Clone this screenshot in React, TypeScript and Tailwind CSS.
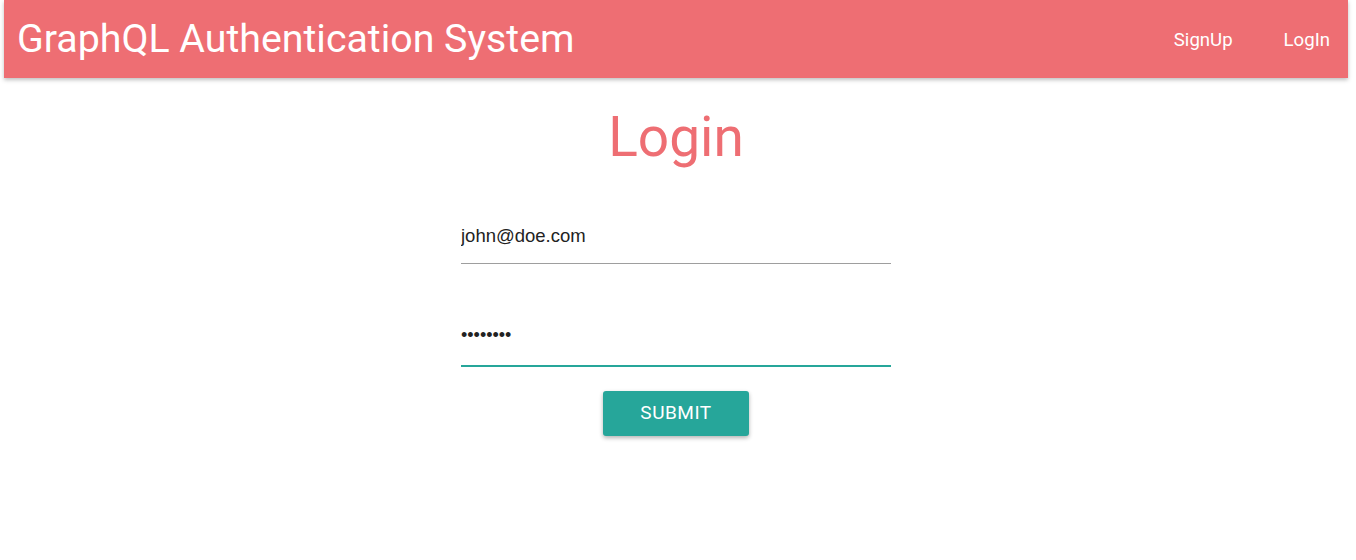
import React, { useState } from 'react';

const roboto = { fontFamily: 'Roboto, "Noto Sans", sans-serif' };
const arial = { fontFamily: '"Liberation Sans", Arial, sans-serif' };

export default function App() {
  const [email, setEmail] = useState('john@doe.com');
  const [password, setPassword] = useState('password');

  return (
    <div className="min-h-[560px] w-[1352px] bg-white" style={roboto}>
      {/* Navbar */}
      <nav className="mx-[4px] h-[78px] bg-[#ee6e73] text-white flex items-center justify-between shadow-[0_2px_4px_rgba(0,0,0,0.25)]">
        <a className="pl-[13px] pt-[1px] text-[39.3px] leading-none font-normal">GraphQL Authentication System</a>
        <ul className="flex items-center gap-[51px] pr-[18px] pt-[3px] text-[18.6px]">
          <li>SignUp</li>
          <li>LogIn</li>
        </ul>
      </nav>

      {/* Login form */}
      <div className="flex flex-col items-center">
        <h2 className="mt-[27px] text-[55px] leading-[64px] text-[#ee6e73] font-normal">Login</h2>

        <form
          className="w-[430px] mt-[49px] flex flex-col"
          onSubmit={e => e.preventDefault()}
        >
          <input
            type="email"
            value={email}
            onChange={e => setEmail(e.target.value)}
            className="h-[46px] pb-[10px] w-full border-b border-[#9e9e9e] text-[18.5px] text-[#222] outline-none bg-transparent"
            style={arial}
          />
          <input
            type="password"
            value={password}
            autoFocus
            onChange={e => setPassword(e.target.value)}
            className="mt-[55px] h-[48px] pb-[14px] w-full border-b-2 border-[#26a69a] text-[18px] text-[#222] outline-none bg-transparent caret-black"
            style={arial}
          />
          <div className="flex justify-center mt-[24px]">
            <button
              type="submit"
              className="w-[146px] h-[45px] rounded-[3px] bg-[#26a69a] text-white text-[19px] tracking-[0.5px] uppercase shadow-[0_2px_4px_rgba(0,0,0,0.3)]"
            >
              Submit
            </button>
          </div>
        </form>
      </div>
    </div>
  );
}
